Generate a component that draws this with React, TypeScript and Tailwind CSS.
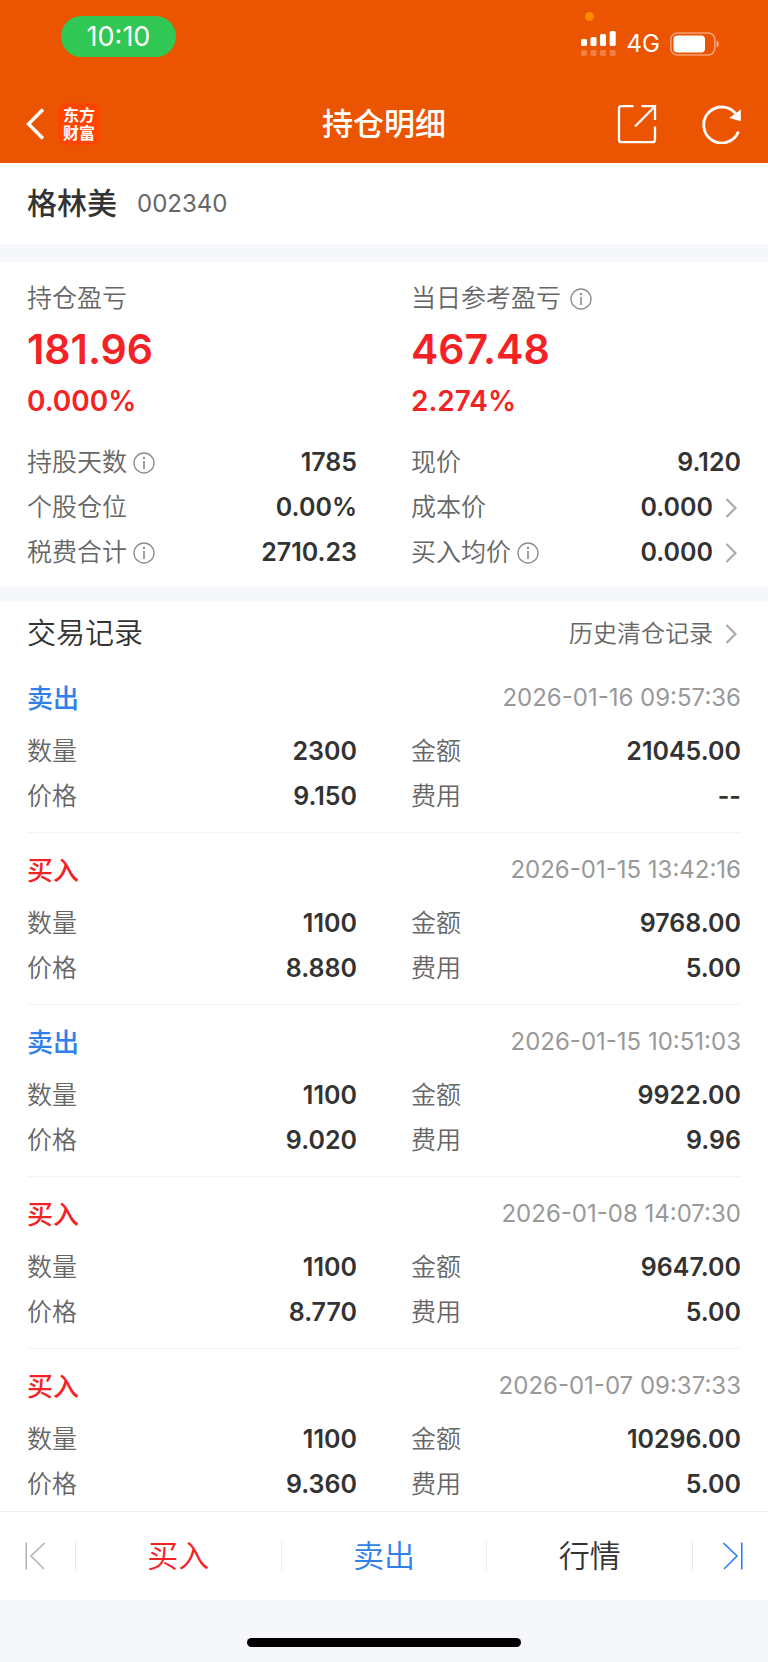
import type { ReactNode } from 'react'

interface Trade {
  side: 'buy' | 'sell'
  time: string
  quantity: string
  amount: string
  price: string
  fee: string
}

const trades: Trade[] = [
  { side: 'sell', time: '2026-01-16 09:57:36', quantity: '2300', amount: '21045.00', price: '9.150', fee: '--' },
  { side: 'buy', time: '2026-01-15 13:42:16', quantity: '1100', amount: '9768.00', price: '8.880', fee: '5.00' },
  { side: 'sell', time: '2026-01-15 10:51:03', quantity: '1100', amount: '9922.00', price: '9.020', fee: '9.96' },
  { side: 'buy', time: '2026-01-08 14:07:30', quantity: '1100', amount: '9647.00', price: '8.770', fee: '5.00' },
  { side: 'buy', time: '2026-01-07 09:37:33', quantity: '1100', amount: '10296.00', price: '9.360', fee: '5.00' },
]

function InfoButton({ label }: { label: string }) {
  return (
    <button type="button" aria-label={`${label}说明`} className="text-[#8f8f8f]">
      <svg width="22" height="22" viewBox="0 0 22 22" fill="none" stroke="currentColor" strokeWidth="1.4">
        <circle cx="11" cy="11" r="10" />
        <path d="M11 9v8" strokeWidth="1.7" />
        <circle cx="11" cy="6" r="1.2" fill="currentColor" stroke="none" />
      </svg>
    </button>
  )
}

function Chevron() {
  return (
    <svg width="12" height="20" viewBox="0 0 12 20" fill="none" stroke="#aaaaaa" strokeWidth="2.2">
      <path d="M1.5 1l9 9-9 9" />
    </svg>
  )
}

function StatusBar() {
  return (
    <div className="relative flex h-[82px] items-start justify-between pt-4 pr-12 pl-[61px]">
      <div className="h-[41px] w-[115px] rounded-full bg-[#31c754] text-center text-[27px] leading-[42px]">10:10</div>
      <span className="absolute top-3 right-[174px] h-[9px] w-[9px] rounded-full bg-[#ff8c00]" />
      <div className="flex items-center gap-[10px] pt-[10px]">
        <svg width="36" height="26" viewBox="0 0 36 26" fill="#fff">
          <rect x="0" y="8" width="6" height="7" rx="1.6" />
          <rect x="9.500" y="6" width="6" height="9" rx="1.6" />
          <rect x="19" y="3" width="6" height="12" rx="1.6" />
          <rect x="28.700" y="0" width="6" height="15" rx="1.6" />
          <g opacity="0.25">
            <rect x="0" y="19" width="6" height="6" rx="1.6" />
            <rect x="9.500" y="19" width="6" height="6" rx="1.6" />
            <rect x="19" y="19" width="6" height="6" rx="1.6" />
            <rect x="28.700" y="19" width="6" height="6" rx="1.6" />
          </g>
        </svg>
        <span className="text-2xl leading-9">4G</span>
        <svg width="50" height="24" viewBox="0 0 50 24" fill="none">
          <rect x="0.800" y="1" width="44" height="22" rx="6.500" stroke="#fff" strokeOpacity="0.45" strokeWidth="1.5" />
          <rect x="3.500" y="3.500" width="31.500" height="17" rx="4" fill="#fff" />
          <path d="M46.500 8.500c3.200 1.200 3.200 5.800 0 7z" fill="#fff" fillOpacity="0.5" />
        </svg>
      </div>
    </div>
  )
}

function NavBar() {
  return (
    <nav className="grid h-[81px] grid-cols-[1fr_auto_1fr] items-center px-[26px] pt-[3px]">
      <div className="flex items-center gap-[14px]">
        <button type="button" aria-label="返回">
          <svg width="18" height="32" viewBox="0 0 18 32" fill="none" stroke="#fff" strokeWidth="3.4">
            <path d="M17 1.500L2.500 16 17 30.500" />
          </svg>
        </button>
        <div className="flex h-[42px] w-[42px] flex-col items-center justify-center rounded-[9px] bg-[#ff4300] text-base leading-[18px] font-bold">
          <span>东方</span>
          <span>财富</span>
        </div>
      </div>
      <h1 className="text-[31px] font-medium">持仓明细</h1>
      <div className="flex items-center justify-end gap-11">
        <button type="button" aria-label="分享">
          <svg width="40" height="40" viewBox="0 0 40 40" fill="none" stroke="#fff" strokeWidth="2.300">
            <path d="M16.500 2.200H4.500a2.500 2.500 0 0 0-2.500 2.500v31a2.500 2.500 0 0 0 2.500 2.500h31a2.500 2.500 0 0 0 2.500-2.500V22.500" />
            <path d="M24.500 2.200H38V16" />
            <path d="M38 2.200L18 22.500" />
          </svg>
        </button>
        <button type="button" aria-label="刷新">
          <svg width="41" height="40" viewBox="0 0 41 40" fill="none" stroke="#fff" strokeWidth="2.800">
            <path d="M37.500 27.500A18 18 0 1 1 36 11.500" />
            <path d="M39.800 5.500v11.800l-11.500-3.300z" fill="#fff" stroke="none" />
          </svg>
        </button>
      </div>
    </nav>
  )
}

interface ProfitProps {
  label: string
  value: string
  percent: string
  info?: boolean
}

function Profit({ label, value, percent, info }: ProfitProps) {
  return (
    <div>
      <div className="flex h-9 items-center gap-[9px]">
        <span className="text-[25px] font-[350] text-[#666]">{label}</span>
        {info && <InfoButton label={label} />}
      </div>
      <p className="mt-2 text-[41px] leading-[48px] font-semibold text-[#f42224]">{value}</p>
      <p className="mt-2 text-[28px] leading-10 font-semibold text-[#f42224]">{percent}</p>
    </div>
  )
}

interface FieldProps {
  label: string
  value: string
  info?: boolean
  link?: boolean
}

function Field({ label, value, info, link }: FieldProps) {
  return (
    <div className="flex h-[45px] items-center justify-between">
      <dt className="flex items-center gap-[6px]">
        <span className="text-[25px] font-[350] text-[#666]">{label}</span>
        {info && <InfoButton label={label} />}
      </dt>
      <dd className="text-[25px] font-semibold text-[#333]">
        {link ? (
          <button type="button" className="flex items-center gap-3 pr-1">
            {value}
            <Chevron />
          </button>
        ) : (
          value
        )}
      </dd>
    </div>
  )
}

function FieldGrid({ children }: { children: ReactNode }) {
  return <dl className="grid grid-cols-2 gap-x-[54px]">{children}</dl>
}

function TradeRecord({ trade }: { trade: Trade }) {
  const isBuy = trade.side === 'buy'
  return (
    <li className="border-b border-[#f2f3f5] pt-3 pb-[13px] last:border-0 last:pb-1">
      <div className="mb-[6px] flex h-[50px] items-center justify-between">
        <h3 className={isBuy ? 'text-[26px] font-medium text-[#f42224]' : 'text-[26px] font-medium text-[#2f80ea]'}>
          {isBuy ? '买入' : '卖出'}
        </h3>
        <time className="text-2xl text-[#999]">{trade.time}</time>
      </div>
      <FieldGrid>
        <Field label="数量" value={trade.quantity} />
        <Field label="金额" value={trade.amount} />
        <Field label="价格" value={trade.price} />
        <Field label="费用" value={trade.fee} />
      </FieldGrid>
    </li>
  )
}

function TabBar() {
  return (
    <footer className="flex h-[89px] items-center border-t border-[#eeeff1] bg-white text-[31px] font-[350]">
      <button type="button" aria-label="上一只" className="flex h-[30px] w-[76px] items-center border-r border-[#e8e8e8] pl-[25px]">
        <svg width="20" height="28" viewBox="0 0 20 28" fill="none" stroke="#b5b5b5" strokeWidth="1.600">
          <path d="M1.200 0.500v27M19.500 1L6 14l13 13" />
        </svg>
      </button>
      <button type="button" className="flex h-[30px] flex-1 items-center justify-center border-r border-[#eeeeee] text-[#f42224]">
        买入
      </button>
      <button type="button" className="flex h-[30px] flex-1 items-center justify-center border-r border-[#eeeeee] text-[#2f80ea]">
        卖出
      </button>
      <button type="button" className="flex h-[30px] flex-1 items-center justify-center border-r border-[#e8e8e8] text-[#333]">
        行情
      </button>
      <button type="button" aria-label="下一只" className="flex h-[30px] w-[75px] items-center justify-end pr-[25px]">
        <svg width="20" height="28" viewBox="0 0 20 28" fill="none" stroke="#2f80ea" strokeWidth="1.600">
          <path d="M18.800 0.500v27M0.500 1L14 14 1 27" />
        </svg>
      </button>
    </footer>
  )
}

export default function App() {
  return (
    <div className="min-h-screen bg-[#f5f7fa] font-['Inter','Noto_Sans_CJK_SC',sans-serif] text-[#333]">
      <header className="bg-[#eb5502] text-white">
        <StatusBar />
        <NavBar />
      </header>

      <main>
        <section className="flex h-[81px] items-center gap-5 bg-white px-[27px]">
          <h2 className="text-[30px] font-medium">格林美</h2>
          <span className="text-2xl text-[#666]">002340</span>
        </section>

        <section className="mt-[18px] bg-white px-[27px] pt-[19px] pb-3">
          <div className="mb-[19px] grid grid-cols-2 gap-x-[54px]">
            <Profit label="持仓盈亏" value="181.96" percent="0.000%" />
            <Profit label="当日参考盈亏" value="467.48" percent="2.274%" info />
          </div>
          <FieldGrid>
            <Field label="持股天数" value="1785" info />
            <Field label="现价" value="9.120" />
            <Field label="个股仓位" value="0.00%" />
            <Field label="成本价" value="0.000" link />
            <Field label="税费合计" value="2710.23" info />
            <Field label="买入均价" value="0.000" info link />
          </FieldGrid>
        </section>

        <section className="mt-[14px] bg-white px-[27px]">
          <div className="flex h-[60px] items-center justify-between pt-[6px]">
            <h2 className="text-[29px] font-[350]">交易记录</h2>
            <a href="#history" className="flex items-center gap-3 pr-1 text-2xl font-[350] text-[#666]">
              历史清仓记录
              <Chevron />
            </a>
          </div>
          <ul>
            {trades.map(t => (
              <TradeRecord key={t.time} trade={t} />
            ))}
          </ul>
        </section>
      </main>

      <TabBar />
      <div className="flex justify-center pt-[38px] pb-[15px]">
        <div className="h-[9px] w-[274px] rounded-full bg-black" />
      </div>
    </div>
  )
}
